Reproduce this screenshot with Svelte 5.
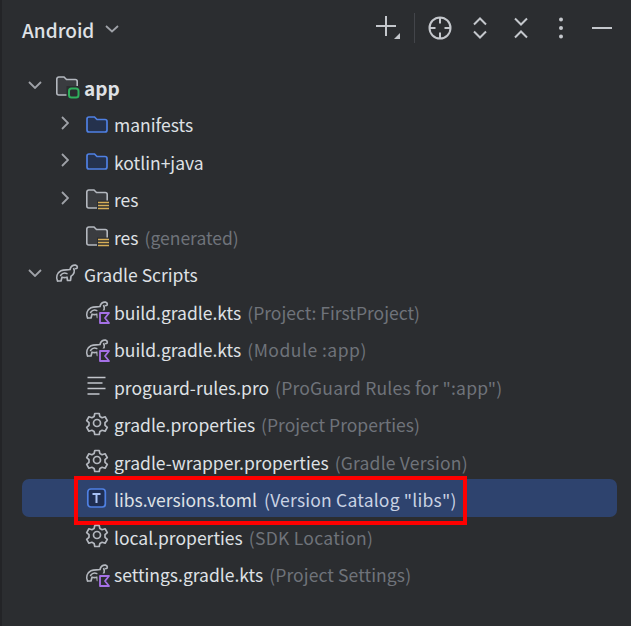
<script>
  const rows = [
    { level: 0, open: true, icon: 'module', name: 'app', bold: true },
    { level: 1, closed: true, icon: 'folder', name: 'manifests' },
    { level: 1, closed: true, icon: 'folder', name: 'kotlin+java' },
    { level: 1, closed: true, icon: 'res', name: 'res' },
    { level: 1, icon: 'res', name: 'res', hint: '(generated)' },
    { level: 0, open: true, icon: 'gradle', name: 'Gradle Scripts' },
    { level: 1, icon: 'kts', name: 'build.gradle.kts', hint: '(Project: FirstProject)' },
    { level: 1, icon: 'kts', name: 'build.gradle.kts', hint: '(Module :app)', track: 0.5 },
    { level: 1, icon: 'lines', name: 'proguard-rules.pro', hint: '(ProGuard Rules for ":app")', track: 0.2 },
    { level: 1, icon: 'gear', name: 'gradle.properties', hint: '(Project Properties)' },
    { level: 1, icon: 'gear', name: 'gradle-wrapper.properties', hint: '(Gradle Version)', track: 0.2 },
    { level: 1, icon: 'toml', name: 'libs.versions.toml', note: '(Version Catalog "libs")', track: 0.2 },
    { level: 1, icon: 'gear', name: 'local.properties', hint: '(SDK Location)', track: 0.3 },
    { level: 1, icon: 'kts', name: 'settings.gradle.kts', hint: '(Project Settings)', track: 0.1 },
  ];
</script>

{#snippet elephant()}
  <path d="M2.500 19C.8 15 2 10.800 6 8.800c3-1.500 6-.6 9-1.300.5-3 3-4.800 5.500-4.300 2.300.5 2.500 3.300.3 3.500" fill="none" stroke="#b4b8bf" stroke-width="1.700" stroke-linecap="round"/>
  <path d="M18.500 6c1.800 3.300.4 6.800-2.500 8.300L15.500 18.500h-3L12 15.200c-1.800.6-3.500.5-5 0L6 19H2.500" fill="none" stroke="#b4b8bf" stroke-width="1.700" stroke-linejoin="round"/>
  <path d="M5.500 13.500c1.800-2.500 4.500-2.800 6.500-1.800" fill="none" stroke="#b4b8bf" stroke-width="1.500" stroke-linecap="round"/>
{/snippet}

{#snippet folderGrey()}
  <path d="M1.800 19V5a2 2 0 0 1 2-2H9l2.500 2.500h8.700a2 2 0 0 1 2 2V19a2 2 0 0 1-2 2H3.800a2 2 0 0 1-2-2z" fill="#3a3c40" stroke="#b4b8bf" stroke-width="1.600"/>
{/snippet}

{#snippet icon(kind)}
  <svg class="icon" viewBox="0 0 24 24" width="24" height="24">
    {#if kind === 'folder'}
      <path d="M2 7a2 2 0 0 1 2-2h5.500l2.500 2.500h8a2 2 0 0 1 2 2V18a2 2 0 0 1-2 2H4a2 2 0 0 1-2-2z" fill="#25324d" stroke="#4f80e3" stroke-width="1.700"/>
    {:else if kind === 'module'}
      {@render folderGrey()}
      <rect x="11.500" y="12" width="14" height="13" fill="#2b2d30"/>
      <rect x="14" y="14.500" width="9.500" height="9" rx="2.500" fill="#2b2d30" stroke="#2fb05c" stroke-width="2"/>
    {:else if kind === 'res'}
      {@render folderGrey()}
      <rect x="12" y="13.500" width="13" height="10" fill="#2b2d30"/>
      <path d="M13 15.500h11M13 18.500h11M13 21.500h11" stroke="#d6ae58" stroke-width="1.700"/>
    {:else if kind === 'gradle'}
      {@render elephant()}
    {:else if kind === 'kts'}
      {@render elephant()}
      <rect x="12.500" y="11.500" width="12" height="13" fill="#2b2d30"/>
      <path d="M24 14h-9v10h9l-4-5z" fill="#2b2d30" stroke="#a571e6" stroke-width="1.800" stroke-linejoin="round"/>
    {:else if kind === 'lines'}
      <path d="M2.500 3.500h18M2.500 9h15M2.500 14.500h18M2.500 20h12" stroke="#c2c5cb" stroke-width="1.600"/>
    {:else if kind === 'gear'}
      <path d="M9.800 1.500h4.400l.7 3 2.200 1.200 3-.9 2.200 3.800-2.300 2.100v2.600l2.300 2.100-2.200 3.800-3-.9-2.200 1.200-.7 3H9.800l-.7-3-2.200-1.200-3 .9-2.200-3.800 2.300-2.100v-2.600L1.700 8.600l2.200-3.800 3 .9 2.200-1.200z" fill="none" stroke="#b4b8bf" stroke-width="1.700" stroke-linejoin="round"/>
      <circle cx="12" cy="11" r="3.500" fill="none" stroke="#b4b8bf" stroke-width="1.700"/>
    {:else if kind === 'toml'}
      <rect x="2.800" y="2" width="17.500" height="18" rx="3" fill="#1f2e52" stroke="#4f80e3" stroke-width="1.700"/>
      <path d="M7.500 7h8M11.500 7v9" stroke="#a8c1f5" stroke-width="2"/>
    {/if}
  </svg>
{/snippet}

<div class="panel">
  <header>
    <div class="title">
      <span>Android</span>
      <svg viewBox="0 0 14 8" width="14" height="8"><path d="M1 1l6 5.500L13 1" class="line"/></svg>
    </div>
    <div class="tools">
      <svg class="add" viewBox="0 0 26 26" width="26" height="26">
        <path d="M11 1v20M1 11h20" class="line wide"/>
        <path d="M25 18v6h-6z" fill="#c4c7cc"/>
      </svg>
      <span class="sep"></span>
      <span class="tool">
        <svg viewBox="0 0 24 24" width="24" height="24">
          <circle cx="12" cy="12" r="10.500" class="line wide"/>
          <path d="M12 1.500v6M12 16.500v6M1.500 12h6M16.500 12h6" class="line wide"/>
        </svg>
      </span>
      <span class="tool">
        <svg viewBox="0 0 16 24" width="16" height="24">
          <path d="M2 8.500l6-6 6 6M2 15.500l6 6 6-6" class="line wide"/>
        </svg>
      </span>
      <span class="tool">
        <svg viewBox="0 0 16 24" width="16" height="24">
          <path d="M2 2.500l6 6 6-6M2 21.500l6-6 6 6" class="line wide"/>
        </svg>
      </span>
      <span class="tool">
        <svg viewBox="0 0 6 24" width="6" height="24">
          <circle cx="3" cy="3.500" r="2" fill="#c4c7cc"/><circle cx="3" cy="12" r="2" fill="#c4c7cc"/><circle cx="3" cy="20.500" r="2" fill="#c4c7cc"/>
        </svg>
      </span>
      <span class="tool">
        <svg viewBox="0 0 20 24" width="20" height="24"><path d="M0 12h20" class="line wide"/></svg>
      </span>
    </div>
  </header>

  <ul class="tree">
    {#each rows as row}
      <li class="row" class:selected={row.note} class:sub={row.level === 1}>
        <span class="arrow">
          {#if row.open}
            <svg viewBox="0 0 14 8" width="14" height="8"><path d="M1 1l6 6 6-6" class="line"/></svg>
          {:else if row.closed}
            <svg viewBox="0 0 8 14" width="8" height="14"><path d="M1 1l6 6-6 6" class="line"/></svg>
          {/if}
        </span>
        {@render icon(row.icon)}
        <span class="name" class:bold={row.bold}>{row.name}</span>
        {#if row.hint}<span class="hint" style:letter-spacing={row.track ? `${row.track}px` : null}>{row.hint}</span>{/if}
        {#if row.note}
          <span class="note" style:letter-spacing={`${row.track}px`}>{row.note}</span>
          <span class="mark"></span>
        {/if}
      </li>
    {/each}
  </ul>
</div>

<style>
  :global(body) {
    background: #2b2d30;
  }
  .panel {
    width: 631px;
    height: 626px;
    box-sizing: border-box;
    background: #2b2d30;
    border-left: 2px solid #232427;
    color: #dfe1e5;
    font-family: "Noto Sans CJK KR", "Noto Sans", sans-serif;
    font-size: 17.500px;
    overflow: hidden;
  }
  header {
    display: flex;
    justify-content: space-between;
    align-items: center;
    height: 60px;
    padding: 0 9px 0 20px;
  }
  .title {
    display: flex;
    align-items: center;
    gap: 11px;
    font-size: 19px;
    font-weight: 500;
    margin-bottom: 2px;
  }
  .tools {
    display: flex;
    align-items: center;
    margin-bottom: 4px;
  }
  .add {
    margin-right: 1px;
  }
  .sep {
    width: 1px;
    height: 30px;
    background: #43454a;
    margin: 0 5px 0 12px;
  }
  .tool {
    display: flex;
    justify-content: center;
    width: 40.500px;
  }
  .line {
    fill: none;
    stroke: #9fa2a8;
    stroke-width: 1.800;
  }
  .wide {
    stroke: #c4c7cc;
    stroke-width: 2;
  }
  .tree {
    list-style: none;
    margin: 6.500px 0 0;
    padding: 0 14px 0 20px;
  }
  .row {
    position: relative;
    display: flex;
    align-items: center;
    height: 37.500px;
    border-radius: 7px;
  }
  .row.sub {
    padding-left: 30px;
  }
  .selected {
    background: #2e436e;
  }
  .arrow {
    display: flex;
    justify-content: center;
    align-items: center;
    flex: none;
    width: 25px;
  }
  .icon {
    flex: none;
    margin: 2px 5px 0 8px;
    overflow: visible;
  }
  .name,
  .hint,
  .note {
    padding-top: 4px;
    white-space: nowrap;
  }
  .bold {
    font-weight: 700;
    font-size: 19px;
  }
  .hint,
  .note {
    margin-left: 6px;
  }
  .note {
    margin-left: 7px;
    color: #c9d2e3;
  }
  .hint {
    color: #6f737a;
  }
  .mark {
    position: absolute;
    left: 52px;
    top: -3px;
    width: 393px;
    height: 49px;
    box-sizing: border-box;
    border: 4px solid #fe0000;
  }
</style>
